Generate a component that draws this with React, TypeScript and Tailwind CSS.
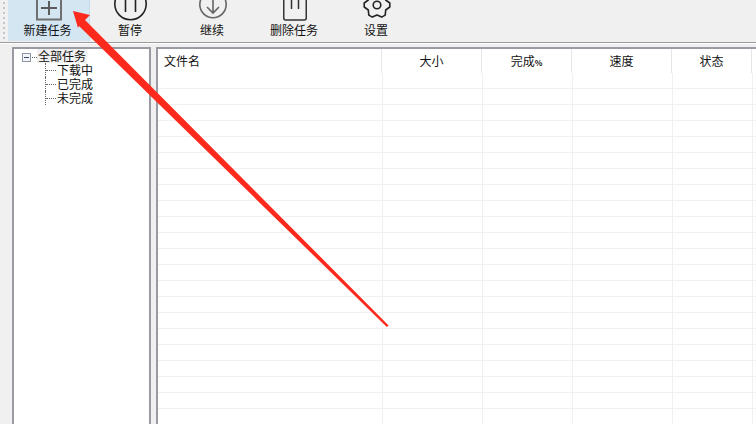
const cjk = { fontFamily: '"Noto Sans CJK SC", "Liberation Sans", sans-serif' };

const tools = [
  {
    label: "新建任务",
    icon: (
      <svg width="40" height="21" viewBox="0 0 40 21" fill="none" stroke="#6f6f6f" strokeWidth="2">
        <path d="M8 -2V19.5H32V-2" />
        <path d="M20 1V15M12 8H28" stroke="#5c5c5c" />
      </svg>
    ),
  },
  {
    label: "暂停",
    icon: (
      <svg width="40" height="21" viewBox="0 0 40 21" fill="none" stroke="#222" strokeWidth="1.6">
        <circle cx="20.5" cy="4" r="15.7" />
        <path d="M15.5 -2V12M25.5 -2V12" />
      </svg>
    ),
  },
  {
    label: "继续",
    icon: (
      <svg width="40" height="21" viewBox="0 0 40 21" fill="none" stroke="#666" strokeWidth="1.6">
        <circle cx="21" cy="4.5" r="13.2" />
        <path d="M21 -2V13M15 7L21 13L27 7" />
      </svg>
    ),
  },
  {
    label: "删除任务",
    icon: (
      <svg width="40" height="21" viewBox="0 0 40 21" fill="none" stroke="#333" strokeWidth="1.5">
        <path d="M9.75 -2V18Q9.75 20 11.75 20H30.25Q32.25 20 32.25 18V-2" />
        <path d="M17.5 -2V9M24.5 -2V9" />
      </svg>
    ),
  },
  {
    label: "设置",
    icon: (
      <svg width="40" height="21" viewBox="0 0 40 21" fill="none" stroke="#222" strokeWidth="1.6" strokeLinejoin="round">
        <path d="M16 -8L12.8 -5.1L12.3 0L8.2 3L8.2 7L12.3 10L12.8 15.1L16.3 17.1L21 15L25.7 17.1L29.2 15.1L29.7 10L33.8 7L33.8 3L29.7 0L29.2 -5.1L26 -8" />
        <circle cx="21" cy="5" r="3.8" />
      </svg>
    ),
  },
];

const cols = [
  { label: "文件名", w: "w-[224px]", align: "pl-[6px] text-left" },
  { label: "大小", w: "w-[100px]", align: "text-center" },
  { label: "完成", pct: true, w: "w-[90px]", align: "text-center" },
  { label: "速度", w: "w-[100px]", align: "text-center" },
  { label: "状态", w: "w-[80px]", align: "text-center" },
];

const rows = Array.from({ length: 22 });

export default function App() {
  return (
    <div className="relative flex h-[424px] w-[756px] flex-col overflow-hidden bg-[#f0f0f0] text-[12px] leading-[14px] text-[#111]" style={cjk}>
      <div className="flex h-[42px] shrink-0 pl-[8px]">
        {tools.map((t, i) => (
          <div
            key={t.label}
            className={`flex h-[41px] w-[82px] shrink-0 flex-col items-center ${i === 0 ? "border-r border-[#c4dcee] bg-[#d5e6f3]" : ""} ${i === 1 ? "-ml-px" : ""}`}
          >
            <div className="h-[21px]">{t.icon}</div>
            <div className={`mt-[2px] ${i === 0 ? "mr-[2px]" : ""}`}>{t.label}</div>
          </div>
        ))}
      </div>
      <div className="h-[2px] shrink-0 border-t border-[#9c9c9c] bg-white" />
      <div className="flex min-h-0 flex-1 pt-[3px]">
        <div className="ml-[12px] w-[139px] shrink-0 border-t-2 border-r-2 border-l-2 border-[#9a9aa2] bg-white pl-[8px]">
          <div className="flex h-[14px] items-center">
            <span className="mt-[2px] flex h-[9px] w-[9px] items-center justify-center border border-[#8d97a8] bg-[#f2f4f8]">
              <span className="h-px w-[5px] bg-[#3c4a6c]" />
            </span>
            <span className="mt-[2px] ml-[1px] w-[5px] border-t border-dotted border-[#666]" />
            <span className="bg-[#f0f0f0] px-px">全部任务</span>
          </div>
          {["下载中", "已完成", "未完成"].map((s) => (
            <div key={s} className="ml-[23px] flex h-[14px] items-center">
              <span className="h-[14px] w-px border-l border-dotted border-[#666]" />
              <span className="w-[10px] border-t border-dotted border-[#666]" />
              <span className="ml-px">{s}</span>
            </div>
          ))}
        </div>
        <div className="ml-[5px] min-w-0 flex-1 overflow-hidden border-t-2 border-l-2 border-[#9a9aa2] bg-white">
          <div className="flex h-[24px]">
            {cols.map((c) => (
              <div key={c.label} className={`${c.w} ${c.align} shrink-0 border-r border-[#e6e6e6] pt-[5px]`}>
                {c.label}
                {c.pct ? <span className="text-[8px] font-bold">%</span> : null}
              </div>
            ))}
          </div>
          {rows.map((_, i) => (
            <div key={i} className="flex h-[16px] border-b border-[#f0f0f0]">
              <div className="w-[225px] shrink-0 border-r border-[#f0f0f0]" />
              <div className="w-[100px] shrink-0 border-r border-[#f0f0f0]" />
              <div className="w-[90px] shrink-0 border-r border-[#f0f0f0]" />
              <div className="w-[100px] shrink-0 border-r border-[#f0f0f0]" />
              <div className="w-[80px] shrink-0 border-r border-[#f0f0f0]" />
            </div>
          ))}
        </div>
      </div>
      <div className="absolute top-[2px] left-[3px] flex flex-col gap-[3px]">
        {Array.from({ length: 8 }).map((_, i) => (
          <span key={i} className="h-[2px] w-[2px] bg-[#c4c4cc]" />
        ))}
      </div>
      <svg className="pointer-events-none absolute top-0 left-0" width="756" height="424" viewBox="0 0 756 424">
        <polygon points="73,11 90,15 85,20 388.6,325.4 386.8,327 79,26 78,28" fill="#fb2a1c" />
      </svg>
    </div>
  );
}
